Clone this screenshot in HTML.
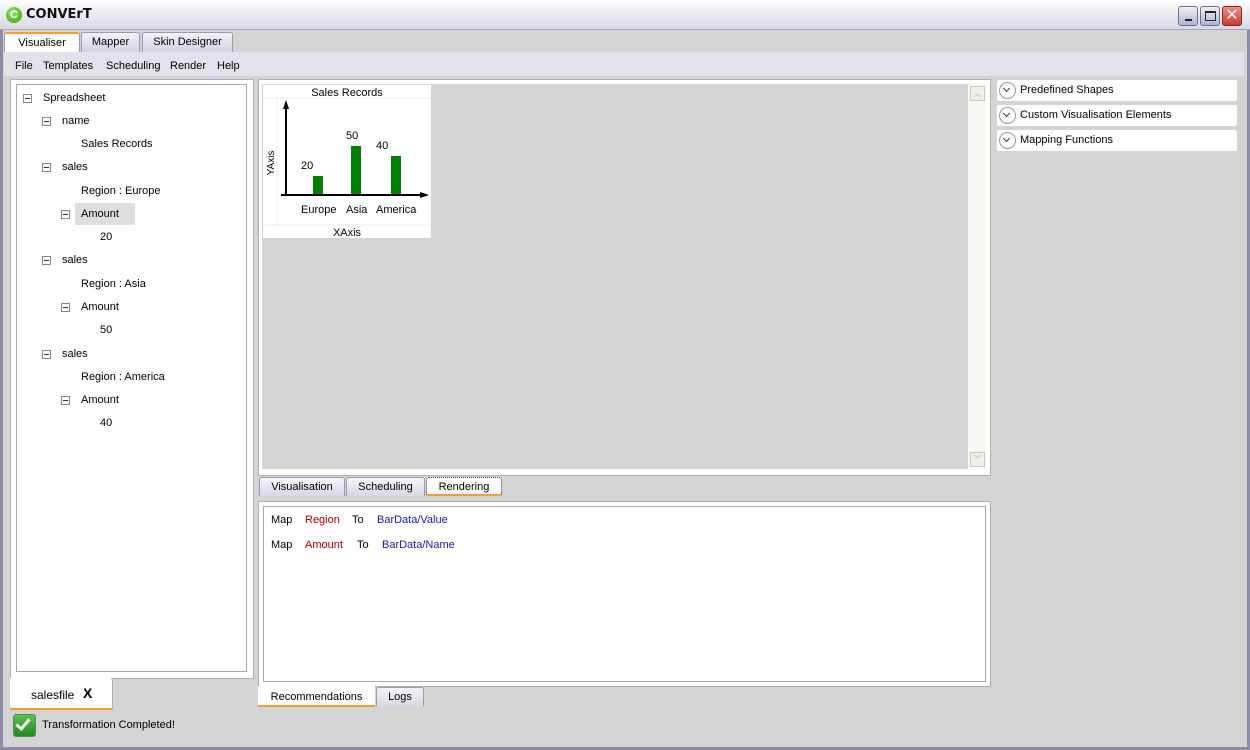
<!DOCTYPE html>
<html><head><style>
*{margin:0;padding:0;box-sizing:border-box}
body{width:1250px;height:750px;overflow:hidden;font-family:"Liberation Sans",sans-serif;font-size:11px;color:#000;background:#d4d4d4;position:relative}
.a{position:absolute}
.frame{left:0;top:0;width:1250px;height:750px;border:3px solid #8c8ca6;border-top:none;background:#d4d4d4}
.title{left:0;top:0;width:1250px;height:30px;background:linear-gradient(#fefefe,#d8d8e4);border-bottom:1px solid #a8a8bc}
.wb{top:6px;width:20px;height:20px;border:1px solid #6e6e90;border-radius:3px;background:linear-gradient(#f0f0f8,#b4b4cc)}
.tab{top:32px;height:20px;border:1px solid #9a9ab0;border-bottom:none;background:linear-gradient(#f2f2f8,#d4d4e4);border-radius:3px 3px 0 0;text-align:center;line-height:19px;font-size:11px}
.box{width:9px;height:9px;border:1px solid #888;background:#fff}
.box:after{content:"";position:absolute;left:1px;top:3px;width:5px;height:1px;background:#333}
.t{position:absolute;font-size:11px;white-space:nowrap}
.btab{height:19px;border:1px solid #9a9ab0;border-bottom:none;background:linear-gradient(#f4f4f8,#d8d8e6);border-radius:3px 3px 0 0;text-align:center;line-height:18px}
.acc{left:997px;width:240px;height:21px;background:#fff;border-radius:2px}
.acc i{position:absolute;left:2px;top:2px;width:17px;height:17px;border:1px solid #999;border-radius:50%}
.acc i:after{content:"";position:absolute;left:4px;top:3px;width:4px;height:4px;border-right:1.5px solid #333;border-bottom:1.5px solid #333;transform:rotate(45deg)}
.acc span{position:absolute;left:23px;top:4px}
</style></head><body>
<div class="a frame"></div>
<div class="a title"></div>
<div class="a" style="left:6px;top:7px;width:16px;height:16px;border-radius:50%;background:radial-gradient(circle at 40% 35%,#9be86a,#2e9a10);color:#fff;font-weight:bold;font-size:11px;text-align:center;line-height:16px">C</div>
<div class="t" style="left:26px;top:7px;font-size:13px;font-weight:bold;color:#111;font-family:'DejaVu Sans',sans-serif">CONVErT</div>
<div class="a wb" style="left:1178px"><div class="a" style="left:6px;top:12px;width:7px;height:2px;background:#223"></div></div>
<div class="a wb" style="left:1200px"><div class="a" style="left:4px;top:4px;width:11px;height:10px;border:1px solid #223;border-top-width:2px"></div></div>
<div class="a wb" style="left:1222px;background:linear-gradient(#f09080,#c83c2c);border-color:#8a2a20;color:#fff;font-size:16px;text-align:center;line-height:17px">✕</div>

<div class="a tab" style="left:4px;width:76px;background:#fff;border-top:2px solid #f0a030">Visualiser</div>
<div class="a tab" style="left:81px;width:59px">Mapper</div>
<div class="a tab" style="left:142px;width:91px">Skin Designer</div>
<div class="a" style="left:4px;top:52px;width:1240px;height:24px;background:#e2e2ec"></div>
<div class="t" style="left:15px;top:60px">File</div>
<div class="t" style="left:43px;top:60px">Templates</div>
<div class="t" style="left:106px;top:60px">Scheduling</div>
<div class="t" style="left:170px;top:60px">Render</div>
<div class="t" style="left:217px;top:60px">Help</div>

<!-- left panel -->
<div class="a" style="left:10px;top:79px;width:244px;height:600px;background:#fff;border:1px solid #b0b0b0"></div>
<div class="a" style="left:16px;top:84px;width:231px;height:588px;border:1px solid #a8a8a8"></div>
<div class="a" style="left:75px;top:203px;width:60px;height:22px;background:#dedede"></div>
<div class="a box" style="left:23px;top:94px"></div><div class="t" style="left:43px;top:92px">Spreadsheet</div>
<div class="a box" style="left:42px;top:117px"></div><div class="t" style="left:62px;top:115px">name</div>
<div class="t" style="left:81px;top:138px">Sales Records</div>
<div class="a box" style="left:42px;top:163px"></div><div class="t" style="left:62px;top:161px">sales</div>
<div class="t" style="left:81px;top:185px">Region : Europe</div>
<div class="a box" style="left:61px;top:210px"></div><div class="t" style="left:81px;top:208px">Amount</div>
<div class="t" style="left:100px;top:231px">20</div>
<div class="a box" style="left:42px;top:256px"></div><div class="t" style="left:62px;top:254px">sales</div>
<div class="t" style="left:81px;top:278px">Region : Asia</div>
<div class="a box" style="left:61px;top:303px"></div><div class="t" style="left:81px;top:301px">Amount</div>
<div class="t" style="left:100px;top:324px">50</div>
<div class="a box" style="left:42px;top:350px"></div><div class="t" style="left:62px;top:348px">sales</div>
<div class="t" style="left:81px;top:371px">Region : America</div>
<div class="a box" style="left:61px;top:396px"></div><div class="t" style="left:81px;top:394px">Amount</div>
<div class="t" style="left:100px;top:417px">40</div>
<div class="a" style="left:10px;top:678px;width:103px;height:32px;background:#fff;border-bottom:2px solid #f0a030;border-right:1px solid #b0b0b0;border-radius:0 3px 0 0"></div>
<div class="t" style="left:31px;top:688px;font-size:12px">salesfile</div>
<div class="t" style="left:83px;top:685px;font-size:14px;font-weight:bold">X</div>

<!-- status -->
<div class="a" style="left:13px;top:714px;width:23px;height:23px;border:1px solid #5a8a5a;border-radius:3px;background:linear-gradient(#5cc050,#1f8a1f)"></div>
<div class="a" style="left:19px;top:716px;width:8px;height:14px;border-right:3px solid #fff;border-bottom:3px solid #fff;transform:rotate(40deg)"></div>
<div class="t" style="left:42px;top:719px">Transformation Completed!</div>

<!-- center viewer -->
<div class="a" style="left:258px;top:79px;width:733px;height:397px;background:#fff;border:1px solid #b0b0b0"></div>
<div class="a" style="left:262px;top:84px;width:706px;height:385px;background:#d4d4d4"></div>
<div class="a" style="left:968px;top:84px;width:18px;height:385px;background:#f8f8f4"></div>
<div class="a" style="left:970px;top:86px;width:15px;height:15px;border:1px solid #c8c8c0;background:#f0f0e8;font-size:8px;color:#aaa;text-align:center;line-height:13px">︿</div>
<div class="a" style="left:970px;top:452px;width:15px;height:15px;border:1px solid #c8c8c0;background:#f0f0e8;font-size:8px;color:#aaa;text-align:center;line-height:13px">﹀</div>
<svg class="a" style="left:263px;top:85px" width="168" height="153">
<rect width="168" height="153" fill="#fff"/>
<line x1="0" y1="13" x2="168" y2="13" stroke="#eee"/>
<line x1="14" y1="13" x2="14" y2="140" stroke="#eee"/>
<line x1="0" y1="140" x2="168" y2="140" stroke="#eee"/>
<text x="84" y="11" font-size="11" text-anchor="middle" font-family="Liberation Sans,sans-serif">Sales Records</text>
<text x="84" y="151" font-size="11" text-anchor="middle" font-family="Liberation Sans,sans-serif">XAxis</text>
<text transform="translate(11,78) rotate(-90)" font-size="10" text-anchor="middle" font-family="Liberation Sans,sans-serif">YAxis</text>
<line x1="23" y1="110" x2="23" y2="20" stroke="#000" stroke-width="2"/><path d="M20,24 L23,15 L26,24Z"/>
<line x1="18" y1="110" x2="160" y2="110" stroke="#000" stroke-width="2"/><path d="M157,107 L166,110 L157,113Z"/>
<rect x="50" y="91" width="10" height="18" fill="#008000"/>
<rect x="88" y="61" width="10" height="48" fill="#008000"/>
<rect x="128" y="71" width="10" height="38" fill="#008000"/>
<g font-size="11" font-family="Liberation Sans,sans-serif">
<text x="38" y="84">20</text><text x="83" y="54">50</text><text x="113" y="64">40</text>
<text x="38" y="128">Europe</text><text x="83" y="128">Asia</text><text x="113" y="128">America</text></g>
</svg>

<div class="a btab" style="left:259px;top:477px;width:86px">Visualisation</div>
<div class="a btab" style="left:346px;top:477px;width:79px">Scheduling</div>
<div class="a btab" style="left:426px;top:477px;width:76px;background:#fff;border:1px dotted #333;border-bottom:2px solid #f0a030">Rendering</div>

<div class="a" style="left:258px;top:501px;width:733px;height:186px;background:#fff;border:1px solid #b0b0b0"></div>
<div class="a" style="left:263px;top:506px;width:723px;height:176px;border:1px solid #a8a8a8"></div>
<div class="t" style="left:271px;top:514px">Map</div><div class="t" style="left:305px;top:514px;color:#a00000">Region</div><div class="t" style="left:352px;top:514px">To</div><div class="t" style="left:377px;top:514px;color:#1a1a9a">BarData/Value</div>
<div class="t" style="left:271px;top:539px">Map</div><div class="t" style="left:305px;top:539px;color:#a00000">Amount</div><div class="t" style="left:357px;top:539px">To</div><div class="t" style="left:382px;top:539px;color:#1a1a9a">BarData/Name</div>
<div class="a" style="left:258px;top:686px;width:117px;height:21px;background:#fff;border-bottom:2px solid #f0a030;text-align:center;line-height:22px">Recommendations</div>
<div class="a btab" style="left:376px;top:687px;width:48px">Logs</div>

<!-- right -->
<div class="a acc" style="top:80px"><i></i><span>Predefined Shapes</span></div>
<div class="a acc" style="top:105px"><i></i><span>Custom Visualisation Elements</span></div>
<div class="a acc" style="top:130px"><i></i><span>Mapping Functions</span></div>
</body></html>
